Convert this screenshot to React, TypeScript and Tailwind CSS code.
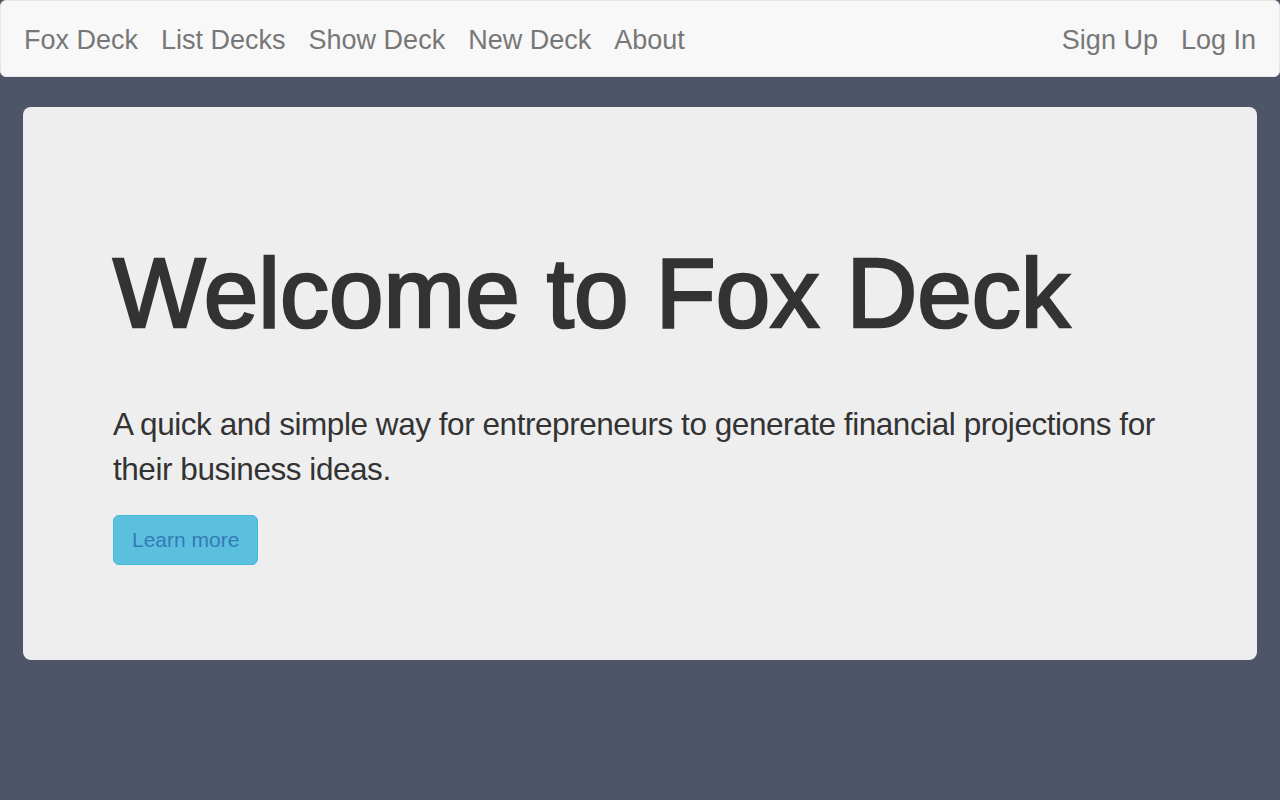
const FONT = { fontFamily: '"Liberation Sans", Arial, sans-serif' }

const leftLinks = ['List Decks', 'Show Deck', 'New Deck', 'About']
const rightLinks = ['Sign Up', 'Log In']

export default function App() {
  return (
    <div className="min-h-[800px] bg-[#4f5569]" style={FONT}>
      <nav className="h-[77px] flex items-center justify-between bg-[#f8f8f8] border border-[#e7e7e7] rounded-[6px] px-[23px] pt-[4px] text-[27px] text-[#777]">
        <div className="flex items-center gap-[23px]">
          <a className="text-[27px] text-[#777]">Fox Deck</a>
          {leftLinks.map(l => (
            <a key={l} className="text-[#777]">{l}</a>
          ))}
        </div>
        <div className="flex items-center gap-[23px]">
          {rightLinks.map(l => (
            <a key={l} className="text-[#777]">{l}</a>
          ))}
        </div>
      </nav>

      <div className="mx-[23px] mt-[30px] bg-[#eee] rounded-[8px] pt-[132px] pb-[95px] px-[90px] text-[#333]">
        <h1 className="text-[98px] leading-[108px] font-normal text-[#333] [-webkit-text-stroke:2.6px_#333]">Welcome to Fox Deck</h1>
        <p className="mt-[55px] text-[31.5px] leading-[45px] tracking-[-0.45px] text-[#333]">
          A quick and simple way for entrepreneurs to generate financial projections for their business ideas.
        </p>
        <a className="mt-[23px] inline-flex items-center h-[50px] px-[18px] bg-[#5bc0de] border border-[#46b8da] rounded-[6px] text-[21px] text-[#337ab7]">
          Learn more
        </a>
      </div>
    </div>
  )
}
